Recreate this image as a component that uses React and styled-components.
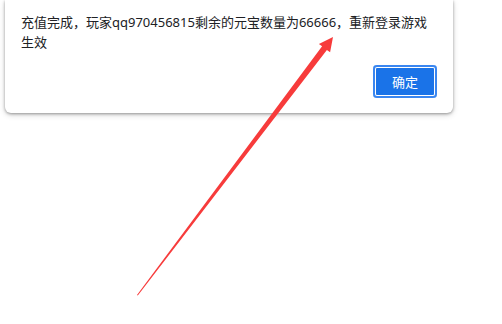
import React from "react";
import styled, { createGlobalStyle } from "styled-components";

const Global = createGlobalStyle`
  html, body { margin: 0; padding: 0; background: #ffffff; }
  body { width: 502px; height: 324px; overflow: hidden; font-family: "Noto Sans", "Noto Sans CJK SC", sans-serif; }
`;

const Page = styled.div`
  position: relative;
  width: 502px;
  height: 324px;
  background: #fff;
`;

const Dialog = styled.div`
  margin-left: 5px;
  width: 448px;
  box-sizing: border-box;
  padding: 12px 16px 15px 16px;
  background: #fff;
  border-radius: 0 0 6px 6px;
  box-shadow: 0 1px 3px rgba(0, 0, 0, 0.35), 0 2px 6px rgba(0, 0, 0, 0.15);
  display: flex;
  flex-direction: column;
  gap: 13px;
`;

const Message = styled.div`
  font-family: "Noto Sans", "Noto Sans CJK SC", sans-serif;
  font-size: 13px;
  line-height: 20px;
  color: #202124;
  word-break: break-all;
`;

const Actions = styled.div`
  display: flex;
  justify-content: flex-end;
`;

const Button = styled.button`
  width: 64px;
  height: 33px;
  box-sizing: border-box;
  border: none;
  border-radius: 4px;
  background: #1a73e8;
  color: #fff;
  font-family: "Noto Sans CJK SC", sans-serif;
  font-size: 13px;
  padding: 0;
  box-shadow: inset 0 0 0 2px #3a86f0, inset 0 0 0 3px #ffffff;
  cursor: pointer;
`;

const Arrow = styled.svg`
  position: absolute;
  left: 0;
  top: 0;
  pointer-events: none;
`;

export default function App() {
  return (
    <Page>
      <Global />
      <Dialog>
        <Message>充值完成，玩家qq970456815剩余的元宝数量为66666，重新登录游戏生效</Message>
        <Actions>
          <Button>确定</Button>
        </Actions>
      </Dialog>
      <Arrow width="502" height="324" viewBox="0 0 502 324">
        <polygon
          points="137,295 137.8,295.4 326.9,49.9 330.1,52.3 333,37 318.9,43.9 322.1,46.3"
          fill="#f73b3b"
        />
      </Arrow>
    </Page>
  );
}
